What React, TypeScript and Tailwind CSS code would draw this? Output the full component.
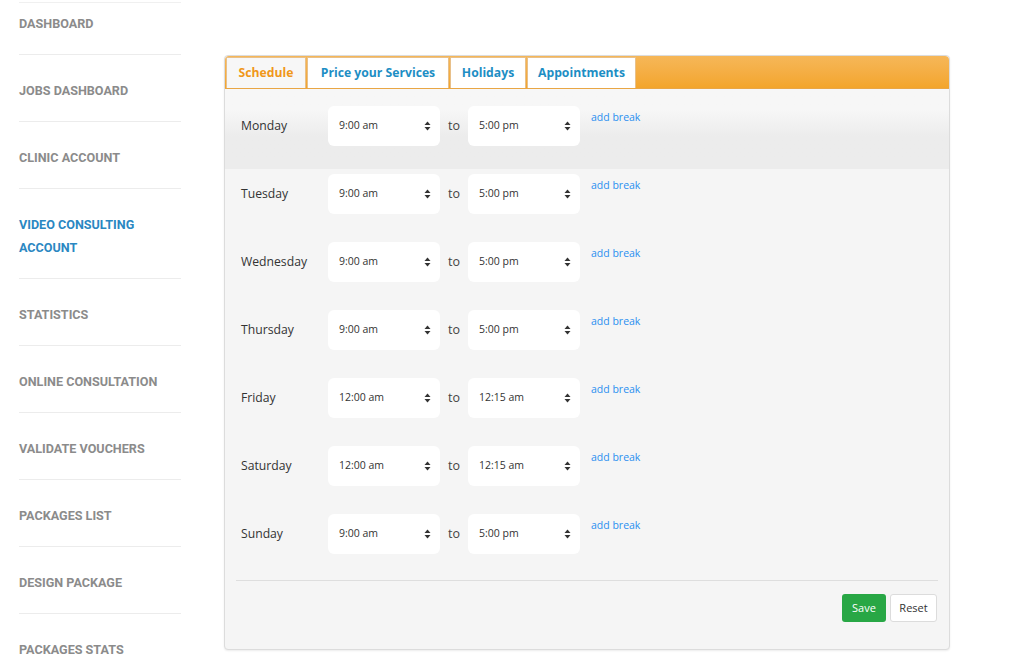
const navItems = [
  { label: 'DASHBOARD' },
  { label: 'JOBS DASHBOARD' },
  { label: 'CLINIC ACCOUNT' },
  { label: 'VIDEO CONSULTING ACCOUNT', active: true },
  { label: 'STATISTICS' },
  { label: 'ONLINE CONSULTATION' },
  { label: 'VALIDATE VOUCHERS' },
  { label: 'PACKAGES LIST' },
  { label: 'DESIGN PACKAGE' },
  { label: 'PACKAGES STATS' },
]

const days = [
  { day: 'Monday', from: '9:00 am', to: '5:00 pm' },
  { day: 'Tuesday', from: '9:00 am', to: '5:00 pm' },
  { day: 'Wednesday', from: '9:00 am', to: '5:00 pm' },
  { day: 'Thursday', from: '9:00 am', to: '5:00 pm' },
  { day: 'Friday', from: '12:00 am', to: '12:15 am' },
  { day: 'Saturday', from: '12:00 am', to: '12:15 am' },
  { day: 'Sunday', from: '9:00 am', to: '5:00 pm' },
]

const tabs = [
  { label: 'Schedule', w: 'w-[80px]', active: true },
  { label: 'Price your Services', w: 'w-[142px]' },
  { label: 'Holidays', w: 'w-[76px]' },
  { label: 'Appointments', w: 'w-[109px]' },
]

function Arrows() {
  return (
    <svg width="7" height="10" viewBox="0 0 7 10" className="text-[#333]">
      <path d="M3.5 0.5 L6.5 4 L0.5 4 Z" fill="currentColor" />
      <path d="M3.5 9.5 L6.5 6 L0.5 6 Z" fill="currentColor" />
    </svg>
  )
}

function TimeSelect({ value }: { value: string }) {
  return (
    <div className="flex h-[40px] w-[112px] items-center justify-between rounded-[6px] bg-white pl-[11px] pr-[9px] text-[10.5px] text-[#333]">
      <span>{value}</span>
      <Arrows />
    </div>
  )
}

export default function App() {
  return (
    <div className="flex h-[668px] w-[1024px] overflow-hidden bg-white">
      <aside className="ml-[19px] mt-[2px] w-[162px] border-t border-[#f0f0f0] font-['Roboto',sans-serif] text-[12.6px] font-bold">
        {navItems.map((item, i) => (
          <div
            key={item.label}
            className={`border-b border-[#ececec] leading-[23px] ${
              i === 0 ? 'pt-[9px] pb-[19px]' : 'pt-[23.5px] pb-[19.5px]'
            } ${item.active ? 'pr-[30px] text-[#2a87c2]' : 'text-[#8b8b8b]'}`}
          >
            {item.label}
          </div>
        ))}
      </aside>

      <main className="ml-[43px] mt-[55px] font-['Open_Sans',sans-serif]">
        <div className="h-[595px] w-[726px] overflow-hidden rounded-[4px] border border-[#dcdcdc] bg-[#f5f5f5] shadow-[0_1px_2px_rgba(0,0,0,0.08)]">
          <div className="flex h-[33px] items-end gap-[1px] rounded-t-[4px] border-b border-[#e9a645] bg-gradient-to-b from-[#f6b758] to-[#f3a52a] pl-[1px]">
            {tabs.map((t) => (
              <div
                key={t.label}
                className={`flex h-[31px] items-center justify-center border border-b-0 border-[#e8c08a] text-[12.2px] font-bold ${t.w} ${
                  t.active ? 'bg-[#f7f7f7] text-[#f0971a]' : 'bg-white text-[#1d8ec4]'
                }`}
              >
                {t.label}
              </div>
            ))}
          </div>

          <div>
            {days.map((d, i) => (
              <div
                key={d.day}
                className={`flex h-[68px] items-start pl-[16px] pt-[17px] ${
                  i === 0
                    ? 'bg-gradient-to-b from-[#f7f7f7] from-30% to-[#ececec] to-70% shadow-[0_12px_0_#ececec]'
                    : ''
                }`}
              >
                <div className="flex h-[40px] w-[87px] items-center text-[12.2px] text-[#333]">{d.day}</div>
                <TimeSelect value={d.from} />
                <div className="flex h-[40px] w-[28px] items-center justify-center text-[12.5px] text-[#444]">to</div>
                <TimeSelect value={d.to} />
                <a className="ml-[11px] mt-[4px] text-[10.5px] text-[#2a8ff0]">add break</a>
              </div>
            ))}
          </div>

          <div className="mx-[11px] mt-[15px] border-t border-[#dedede]" />

          <div className="mr-[12px] mt-[13px] flex justify-end gap-[4px]">
            <button className="h-[28px] w-[44px] rounded-[3px] bg-[#28a745] text-[11px] text-white">Save</button>
            <button className="h-[28px] w-[47px] rounded-[3px] border border-[#dcdcdc] bg-white text-[11px] text-[#333]">
              Reset
            </button>
          </div>
        </div>
      </main>
    </div>
  )
}
